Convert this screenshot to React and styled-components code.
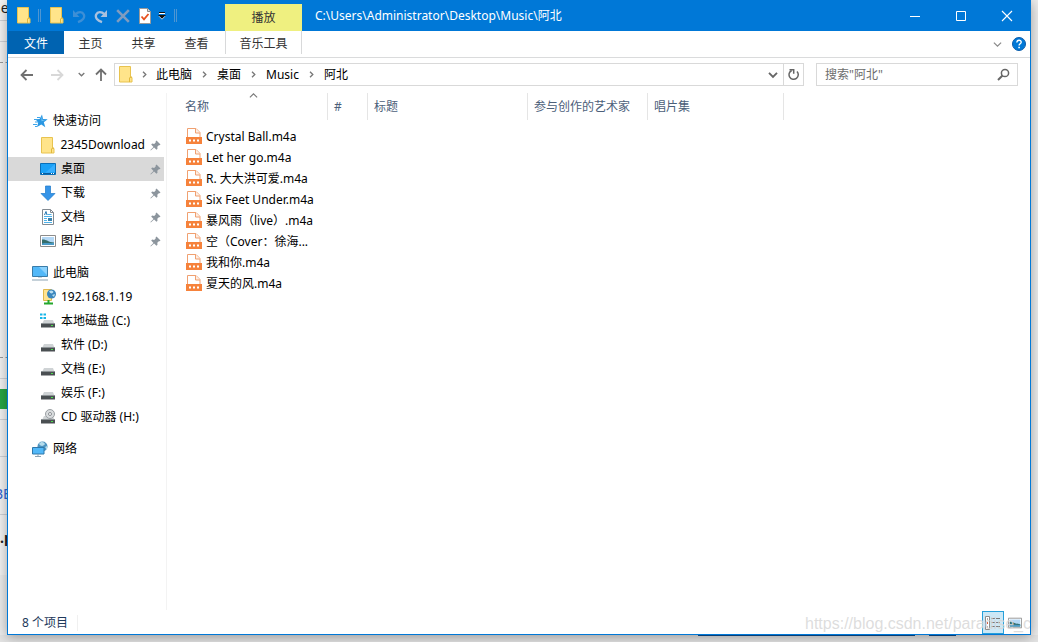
import React from "react";
import styled, { createGlobalStyle, css } from "styled-components";

const GlobalStyle = createGlobalStyle`
  * { box-sizing: border-box; }
  body { margin: 0; background: #ededed; }
  body, button, input {
    font-family: "Noto Sans", "Noto Sans CJK SC", sans-serif;
    font-size: 12px;
    line-height: 16px;
    color: #000;
  }
  button { margin: 0; padding: 0; border: 0; background: none; }
  svg { display: block; flex: none; }
`;

const Desktop = styled.div`
  position: relative;
  display: flex;
  min-height: 100vh;
  padding: 0 7px 7px;
  overflow: hidden;
`;

/* Page that shows behind the window */
const Backdrop = styled.div`
  position: absolute;
  inset: 0;
  display: flex;
  flex-direction: column;
  justify-content: space-between;
`;
const PageEdge = styled.div`
  width: 14px;
  overflow: hidden;
  background: #f4f4f4;
  font-size: 14px;
`;
const EdgeBlock = styled.div`
  height: ${(p) => p.$h}px;
  border-bottom: 1px ${(p) => (p.$dashed ? "dashed #999" : "solid #d0d3d8")};
  background: ${(p) => p.$bg || "transparent"};
  ${(p) => p.$plain && css`border-bottom: 0;`}
  color: ${(p) => p.$color || "#222"};
  font-weight: ${(p) => p.$weight || 400};
  padding-top: ${(p) => p.$top || 0}px;
  text-indent: ${(p) => p.$indent || 0}px;
  white-space: nowrap;
`;
const Taskbar = styled.div`
  display: flex;
  justify-content: flex-end;
  gap: 14px;
  height: 7px;
  padding-right: 82px;
  background: #e4e4e4;
`;
const TaskItem = styled.div`
  width: ${(p) => p.$w}px;
  height: 1px;
  background: #0b4f94;
`;

const Window = styled.main`
  position: relative;
  flex: 1;
  display: flex;
  flex-direction: column;
  background: #fff;
  border: 1px solid #0078d7;
  border-top: 0;
  box-shadow: 0 2px 12px rgba(0, 0, 0, 0.35);
`;

const TitleBar = styled.header`
  display: flex;
  height: 31px;
  background: #0078d7;
  color: #fff;
`;
const QuickAccess = styled.div`
  display: flex;
  align-items: center;
  width: 217px;
  padding-left: 8px;
`;
const QuickButton = styled.button`
  display: flex;
  align-items: center;
  justify-content: center;
  width: ${(p) => p.$w || 22}px;
  height: 31px;
`;
const Separator = styled.span`
  width: 3px;
  height: 13px;
  margin: 0 5px 0 6px;
  border: solid #4f96d2;
  border-width: 0 1px;
`;
const ContextTab = styled.div`
  display: flex;
  align-items: center;
  justify-content: center;
  width: 77px;
  margin-top: 4px;
  background: #eff080;
  color: #333;
`;
const Title = styled.h1`
  flex: 1;
  margin: 0;
  padding-left: 13px;
  font-size: 12px;
  font-weight: 400;
  line-height: 31px;
  white-space: nowrap;
`;
const CaptionButton = styled.button`
  display: flex;
  align-items: center;
  justify-content: center;
  width: 46px;
`;

const Ribbon = styled.div`
  display: flex;
  height: 27px;
  padding-bottom: 3px;
  border-bottom: 1px solid #dadbdc;
`;
const Tab = styled.button`
  width: 53px;
  height: 23px;
  padding-top: 2px;
  color: #333;
  ${(p) => p.$file && css`width: 56px; background: #0063b1; color: #fff;`}
  ${(p) => p.$context && css`
    width: 77px;
    margin-left: 2px;
    border: solid #d8d9da;
    border-width: 0 1px;
  `}
`;
const RibbonEnd = styled.div`
  display: flex;
  align-items: center;
  gap: 10px;
  margin-left: auto;
  padding: 3px 4px 0 0;
`;

const AddressRow = styled.div`
  display: flex;
  height: 35px;
  padding: 5px 12px 7px 11px;
`;
const History = styled.div`
  display: flex;
  align-items: center;
  gap: 6px;
  width: 95px;
`;
const HistoryButton = styled.button`
  display: flex;
  justify-content: center;
  width: ${(p) => p.$w}px;
`;
const AddressBox = styled.nav`
  flex: 1;
  display: flex;
  align-items: center;
  height: 23px;
  padding-left: 4px;
  border: 1px solid #d9d9d9;
`;
const Crumb = styled.a`
  color: #000;
  text-decoration: none;
`;
const CrumbArrow = styled.span`
  display: flex;
  justify-content: center;
  width: ${(p) => (p.$first ? 23 : 25)}px;
`;
const AddressButton = styled.button`
  display: flex;
  align-items: center;
  justify-content: center;
  width: 20px;
  height: 21px;
  ${(p) => p.$push && css`margin-left: auto;`}
  ${(p) => p.$line && css`border-left: 1px solid #d9d9d9;`}
`;
const SearchBox = styled.form`
  display: flex;
  align-items: center;
  width: 202px;
  height: 23px;
  margin-left: 12px;
  padding: 0 7px 0 8px;
  border: 1px solid #d9d9d9;
`;
const SearchInput = styled.input`
  flex: 1;
  min-width: 0;
  padding: 0;
  border: 0;
  outline: 0;
  background: none;
  &::placeholder { color: #6d6d6d; opacity: 1; }
`;

const Body = styled.div`
  flex: 1;
  display: flex;
`;
const Sidebar = styled.nav`
  width: 159px;
  padding: 16px 2px 0 0;
  border-right: 1px solid #f3f3f3;
`;
const Group = styled.ul`
  margin: 0 0 8px;
  padding: 0;
  list-style: none;
`;
const NavLink = styled.a`
  display: flex;
  align-items: center;
  gap: 5px;
  height: 24px;
  padding: 0 3px 0 ${(p) => (p.$root ? 24 : 32)}px;
  background: ${(p) => (p.$selected ? "#d9d9d9" : "transparent")};
  color: #000;
  text-decoration: none;
  white-space: nowrap;
`;
const NavLabel = styled.span`
  flex: 1;
`;

const Content = styled.section`
  flex: 1;
  overflow: hidden;
`;
const FileTable = styled.table`
  width: 617px;
  table-layout: fixed;
  border-collapse: collapse;
  text-align: left;
`;
const HeadCell = styled.th`
  width: ${(p) => p.$w}px;
  padding: 0 0 6px;
  font-weight: 400;
`;
const HeadLabel = styled.div`
  position: relative;
  height: 27px;
  padding-left: ${(p) => (p.$first ? 18 : 6)}px;
  border-right: 1px solid #e5e5e5;
  color: #4c607a;
  line-height: 27px;
`;
const SortMark = styled.span`
  position: absolute;
  top: -2px;
  left: 82px;
`;
const FileCell = styled.td`
  height: 21px;
  padding: 0 0 0 19px;
`;
const FileName = styled.span`
  display: flex;
  align-items: center;
  gap: 4px;
  white-space: nowrap;
`;

const StatusBar = styled.footer`
  display: flex;
  align-items: center;
  height: 24px;
  padding: 1px 4px 0 14px;
  color: #1e395b;
`;
const ItemCount = styled.span`
  padding-right: 9px;
  border-right: 1px solid #f0f0f0;
`;
const ViewButton = styled.button`
  display: flex;
  align-items: center;
  justify-content: center;
  width: 22px;
  height: 23px;
  ${(p) => p.$active && css`
    margin-left: auto;
    background: #cce8f6;
    border: 1px solid #26a0da;
  `}
`;
const Watermark = styled.span`
  position: absolute;
  right: 0;
  bottom: 0;
  width: 225px;
  overflow: hidden;
  font-family: "Liberation Sans", sans-serif;
  font-size: 16px;
  line-height: 20px;
  white-space: nowrap;
  color: rgba(215, 215, 215, 0.85);
  pointer-events: none;
`;

const Folder = () => (
  <svg width="14" height="17" viewBox="0 0 14 17">
    <path d="M.5.500h11v11h1.500v4.500H.5z" fill="#ffe48a" stroke="#e8c34f" />
    <path d="M10.500 16v-4l1-1h1.500" fill="none" stroke="#e0b83c" />
  </svg>
);
const Chevron = ({ dir = "down", w = 7, color = "#777", stroke = 1.500 }) => {
  const turn = { down: 0, right: -90, up: 180 }[dir];
  return (
    <svg width={w} height={w} viewBox="0 0 8 8">
      <path d="M.8 2.300 4 5.500l3.200-3.200" transform={`rotate(${turn} 4 4)`} fill="none" stroke={color} strokeWidth={stroke} />
    </svg>
  );
};
const Arrow = ({ turn = 0, color = "#707070" }) => (
  <svg width="14" height="14" viewBox="0 0 14 14">
    <g transform={`rotate(${turn} 7 7)`} fill="none" stroke={color} strokeWidth="1.800">
      <path d="M1.500 7H13M6.500 2l-5 5 5 5" />
    </g>
  </svg>
);
const Turn = ({ flip, color }) => (
  <svg width="14" height="16" viewBox="0 0 14 16">
    <g transform={flip ? "translate(14 0) scale(-1 1)" : undefined}>
      <path d="M8 14.200C3.500 12.500.8 9.800 2.200 6.500 3.600 3.500 7.500 3.300 10.500 6.300" fill="none" stroke={color} strokeWidth="2.300" />
      <path d="M13 2v7H6.500z" fill={color} />
    </g>
  </svg>
);
const Cross = ({ size, color, stroke }) => (
  <svg width={size} height={size} viewBox="0 0 12 12">
    <path d="m1 1 10 10M11 1 1 11" fill="none" stroke={color} strokeWidth={stroke} />
  </svg>
);
const CheckDoc = () => (
  <svg width="12" height="16" viewBox="0 0 12 16">
    <path d="M.5.500h8l3 3v12H.5z" fill="#fff" stroke="#9a9a9a" />
    <path d="M8.500.500v3h3" fill="#ddd" stroke="#8a8a8a" />
    <path d="m2.500 8.500 2.500 2.800L9.500 6" fill="none" stroke="#e8501e" strokeWidth="1.800" />
  </svg>
);
const MoreMark = () => (
  <svg width="8" height="8" viewBox="0 0 8 8">
    <path d="M1 .5h6" stroke="#111" />
    <path d="M1 1.500h6" stroke="#fff" />
    <path d="M0 3h8L4 7z" fill="#111" />
    <path d="M1 4.200 4 7.200l3-3" fill="none" stroke="#fff" strokeWidth=".7" />
  </svg>
);
const Minimize = () => (
  <svg width="10" height="10" viewBox="0 0 10 10"><path d="M0 5.500h10" stroke="#fff" /></svg>
);
const Maximize = () => (
  <svg width="10" height="10" viewBox="0 0 10 10"><path d="M.5.500h9v9h-9z" fill="none" stroke="#fff" /></svg>
);
const Help = () => (
  <svg width="14" height="14" viewBox="0 0 14 14">
    <circle cx="7" cy="7" r="6.500" fill="#0078d7" stroke="#0b5cab" />
    <path d="M4.800 5.500c0-3 4.600-2.800 4.400-.2C9.100 6.800 7.100 6.800 7.100 8.500" fill="none" stroke="#fff" strokeWidth="1.400" />
    <path d="M6.300 9.700h1.600v1.500H6.300z" fill="#fff" />
  </svg>
);
const Refresh = () => (
  <svg width="12" height="13" viewBox="0 0 12 13">
    <path d="M3.700 2.500A4.600 4.600 0 1 0 9 3.500" fill="none" stroke="#666" strokeWidth="1.500" />
    <path d="M1.500 1.700h4.200v4" fill="none" stroke="#666" strokeWidth="1.500" />
  </svg>
);
const Search = () => (
  <svg width="13" height="13" viewBox="0 0 13 13">
    <circle cx="8" cy="5" r="3.600" fill="none" stroke="#666" strokeWidth="1.500" />
    <path d="M5.500 7.500 1 12" stroke="#666" strokeWidth="2" />
  </svg>
);
const Pin = () => (
  <svg width="11" height="11" viewBox="0 0 11 11">
    <path d="m6.500.500 4 4-1 .8-.7-.1-1.500 1.600.2 2-1 1-2.400-2.400L.8 10.500l-.4-.4L3.500 7 1.200 4.600l1-1 2 .3L5.800 2.300l-.2-.9z" fill="#8c959d" />
  </svg>
);
const Icon = ({ children }) => (
  <svg width="16" height="16" viewBox="0 0 16 16">{children}</svg>
);
const Star = () => (
  <Icon>
    <path d="m10 1.500 1 4.500 4.700.2-3.900 3 1.500 5-4-2.800L5 14l1.200-4.600L3.500 6.300l4-.2z" fill="#2a97e2" />
    <path d="M5 4.500h3M2 6.500h3M3 9h3M1 11.500h4M3 13.500h2" stroke="#3ea5ea" />
    <path d="m9.500 3 1 4 3 .2-4 1z" fill="#73c5f7" />
  </Icon>
);
const DesktopIcon = () => (
  <Icon>
    <path d="M.5 2.500h15v11H.5z" fill="#1ba1f6" stroke="#0a6fb8" />
    <path d="M1 12h14v1H1z" fill="#0b5c9c" />
    <path d="M2 12.500h1M11 12.500h1M13 12.500h1" stroke="#fff" />
    <path d="M15 3v8L5 12z" fill="#36aeff" />
  </Icon>
);
const Download = () => (
  <Icon><path d="M5.500 1h5v7.500H15L8 15.500 1 8.500h4.500z" fill="#3594e8" stroke="#1d78c8" strokeWidth=".7" /></Icon>
);
const Document = () => (
  <Icon>
    <path d="M2.500.500h8l3 3v12h-11z" fill="#fff" stroke="#838b92" />
    <path d="M10.500.500v3h3" fill="none" stroke="#838b92" />
    <path d="M7.500 5.500h4M4 7.500h8M4 9.500h3M4 11.500h3M4 13.500h8" stroke="#4db2ea" />
    <path d="M4.500 6 6 2.500 7 6" fill="none" stroke="#2477b2" />
    <path d="M8 9h4v3H8z" fill="#3c83ad" />
  </Icon>
);
const Picture = ({ w = 16 }) => (
  <svg width={w} height={w} viewBox="0 0 16 16">
    <path d="M.5 2.500h15v11H.5z" fill="#fff" stroke="#8c8c8c" />
    <path d="M2 4h12v8H2z" fill="#b4d8f6" />
    <path d="M2 6.500c4-.5 6 2.500 12 3V12H2z" fill="#356e6c" />
    <path d="M2 10.500c5-1 8 0 12-.5v2H2z" fill="#4a9bc8" />
  </svg>
);
const Computer = () => (
  <Icon>
    <path d="M.5 1.500h15v10H.5z" fill="#52b8f8" stroke="#3a7ca8" />
    <path d="M15 2v8L7 2z" fill="#8bd2fd" />
    <path d="M6 12h4v1H6z" fill="#c9d6de" />
    <path d="M0 15h16" stroke="#8ba3b3" />
  </Icon>
);
const NetFolder = () => (
  <Icon>
    <path d="M3.500.500h8v11h-8z" fill="#ffe391" stroke="#e0b94d" />
    <circle cx="11.500" cy="5" r="4.500" fill="#3a86bd" />
    <path d="M9 2.500c2-2 4-1 4.500.5-1 2-3 2-4.500-.5M12 6l3-1-1 3z" fill="#b9dff2" />
    <path d="M8.500 11v3M4 14.500h9" stroke="#25a72c" strokeWidth="2" />
  </Icon>
);
const driveBody = (
  <>
    <path d="M4 7h9l1.500 4H2z" fill="#cfd3d5" />
    <path d="M1 10.500h14v4H1z" fill="#4a4f52" />
    <path d="M1 10.500h14" stroke="#8d9396" />
    <path d="M11 12.500h2" stroke="#4be04b" />
  </>
);
const Drive = () => <Icon>{driveBody}</Icon>;
const SystemDrive = () => (
  <Icon>
    {driveBody}
    <path d="M0 .5h2.500v2H0zM3.500.500H6v2H3.500zM0 4h2.500v2H0zM3.500 4H6v2H3.500z" fill="#16b5e8" />
  </Icon>
);
const DiscDrive = () => (
  <Icon>
    {driveBody}
    <circle cx="10" cy="5" r="4.500" fill="#d9dcde" stroke="#9a9fa3" />
    <circle cx="10" cy="5" r="1.500" fill="#fff" stroke="#8b8f93" />
  </Icon>
);
const Network = () => (
  <Icon>
    <circle cx="10.500" cy="5.500" r="5" fill="#4d93bf" />
    <path d="M7 3c2-3 5-2 6 0-1 2-4 3-6 0M13 6l2-1v4z" fill="#b5dcec" />
    <path d="M.5 6.500h11.500v6.500H.5z" fill="#52b8f8" stroke="#2f78ab" />
    <path d="M3 15.500h6M6 13v2" stroke="#8ba3b3" />
  </Icon>
);
const MediaFile = () => (
  <svg width="16" height="18" viewBox="0 0 16 18">
    <path d="M1.500 9.500V.500h8.500l4 4v5" fill="#fff" stroke="#f0a070" />
    <path d="M9.500.500v4.500H14" fill="#fdeee4" stroke="#f0a070" />
    <path d="M0 9h16v7H0z" fill="#f6823b" />
    <path d="M3 11.500h2v2H3zM7 11.500h2v2H7zM11 11.500h2v2h-2z" fill="#fff" />
  </svg>
);
const DetailsView = () => (
  <svg width="16" height="14" viewBox="0 0 16 14">
    <path d="M.5.500h4v13h-4z" fill="#fff" stroke="#8c8c8c" />
    <path d="M2 3h1M2 11h1" stroke="#b0a8a8" strokeWidth="2" />
    <path d="M2 7h1" stroke="#e05040" strokeWidth="2" />
    <path d="M6 2.500h4M11 2.500h4M6 6.500h4M11 6.500h4M6 10.500h4M11 10.500h4" stroke="#777" />
  </svg>
);

const groups = [
  [
    { label: "快速访问", icon: Star, root: true },
    { label: "2345Download", icon: Folder, pin: true },
    { label: "桌面", icon: DesktopIcon, pin: true, selected: true },
    { label: "下载", icon: Download, pin: true },
    { label: "文档", icon: Document, pin: true },
    { label: "图片", icon: Picture, pin: true },
  ],
  [
    { label: "此电脑", icon: Computer, root: true },
    { label: "192.168.1.19", icon: NetFolder },
    { label: "本地磁盘 (C:)", icon: SystemDrive },
    { label: "软件 (D:)", icon: Drive },
    { label: "文档 (E:)", icon: Drive },
    { label: "娱乐 (F:)", icon: Drive },
    { label: "CD 驱动器 (H:)", icon: DiscDrive },
  ],
  [{ label: "网络", icon: Network, root: true }],
];
const columns = [
  ["名称", 161],
  ["#", 40],
  ["标题", 160],
  ["参与创作的艺术家", 120],
  ["唱片集", 136],
];
const files = [
  "Crystal Ball.m4a",
  "Let her go.m4a",
  "R. 大大洪可爱.m4a",
  "Six Feet Under.m4a",
  "暴风雨（live）.m4a",
  "空（Cover：徐海...",
  "我和你.m4a",
  "夏天的风.m4a",
];
const crumbs = ["此电脑", "桌面", "Music", "阿北"];

const IconSlot = styled.span`
  display: flex;
  justify-content: center;
  width: 16px;
`;

export default function App() {
  return (
    <Desktop>
      <GlobalStyle />
      <Backdrop aria-hidden="true">
        <PageEdge>
          <EdgeBlock $h={21} $indent={-8}>ne</EdgeBlock>
          <EdgeBlock $h={21} />
          <EdgeBlock $h={21} $dashed />
          <EdgeBlock $h={295} $dashed />
          <EdgeBlock $h={21} />
          <EdgeBlock $h={10} $plain />
          <EdgeBlock $h={20} $plain $bg="#28a745" />
          <EdgeBlock $h={11} />
          <EdgeBlock $h={37} />
          <EdgeBlock $h={58} $top={29} $indent={-6} $color="#3367d6">BE</EdgeBlock>
          <EdgeBlock $h={60} $plain $top={15} $weight={700}>.p</EdgeBlock>
        </PageEdge>
        <Taskbar>
          <TaskItem $w={217} />
          <TaskItem $w={27} />
        </Taskbar>
      </Backdrop>

      <Window>
        <TitleBar>
          <QuickAccess>
            <QuickButton $w={16} aria-label="窗口菜单"><Folder /></QuickButton>
            <Separator />
            <QuickButton aria-label="新建文件夹"><Folder /></QuickButton>
            <QuickButton aria-label="撤消"><Turn flip color="#3d8fd6" /></QuickButton>
            <QuickButton aria-label="恢复"><Turn color="#a9c1de" /></QuickButton>
            <QuickButton aria-label="删除"><Cross size={14} color="#7f9cc0" stroke={2.2} /></QuickButton>
            <QuickButton aria-label="属性"><CheckDoc /></QuickButton>
            <QuickButton $w={12} aria-label="自定义快速访问工具栏"><MoreMark /></QuickButton>
            <Separator />
          </QuickAccess>
          <ContextTab>播放</ContextTab>
          <Title>C:\Users\Administrator\Desktop\Music\阿北</Title>
          <CaptionButton aria-label="最小化"><Minimize /></CaptionButton>
          <CaptionButton aria-label="最大化"><Maximize /></CaptionButton>
          <CaptionButton aria-label="关闭"><Cross size={12} color="#fff" stroke={1.1} /></CaptionButton>
        </TitleBar>

        <Ribbon>
          <Tab $file>文件</Tab>
          <Tab>主页</Tab>
          <Tab>共享</Tab>
          <Tab>查看</Tab>
          <Tab $context>音乐工具</Tab>
          <RibbonEnd>
            <button aria-label="展开功能区"><Chevron w={9} color="#8a8a8a" stroke={1.1} /></button>
            <button aria-label="帮助"><Help /></button>
          </RibbonEnd>
        </Ribbon>

        <AddressRow>
          <History>
            <HistoryButton $w={16} aria-label="后退"><Arrow /></HistoryButton>
            <HistoryButton $w={32} aria-label="前进"><Arrow turn={180} color="#d8d8d8" /></HistoryButton>
            <HistoryButton $w={4} aria-label="最近浏览的位置"><Chevron w={7} /></HistoryButton>
            <HistoryButton $w={24} aria-label="上移"><Arrow turn={90} /></HistoryButton>
          </History>
          <AddressBox aria-label="地址">
            <Folder />
            {crumbs.map((name, i) => (
              <React.Fragment key={name}>
                <CrumbArrow $first={i === 0}><Chevron dir="right" /></CrumbArrow>
                <Crumb href="#">{name}</Crumb>
              </React.Fragment>
            ))}
            <AddressButton $push aria-label="以前的位置"><Chevron w={10} color="#666" /></AddressButton>
            <AddressButton $line aria-label="刷新"><Refresh /></AddressButton>
          </AddressBox>
          <SearchBox role="search">
            <SearchInput aria-label="搜索" placeholder={'搜索"阿北"'} />
            <button type="button" aria-label="开始搜索"><Search /></button>
          </SearchBox>
        </AddressRow>

        <Body>
          <Sidebar aria-label="导航窗格">
            {groups.map((items) => (
              <Group key={items[0].label}>
                {items.map(({ label, icon: Glyph, root, pin, selected }) => (
                  <li key={label}>
                    <NavLink href="#" $root={root} $selected={selected}>
                      <IconSlot><Glyph /></IconSlot>
                      <NavLabel>{label}</NavLabel>
                      {pin && <Pin />}
                    </NavLink>
                  </li>
                ))}
              </Group>
            ))}
          </Sidebar>
          <Content>
            <FileTable>
              <thead>
                <tr>
                  {columns.map(([name, w], i) => (
                    <HeadCell key={name} $w={w} scope="col">
                      <HeadLabel $first={i === 0}>
                        {name}
                        {i === 0 && <SortMark><Chevron dir="up" w={9} stroke={1} /></SortMark>}
                      </HeadLabel>
                    </HeadCell>
                  ))}
                </tr>
              </thead>
              <tbody>
                {files.map((name) => (
                  <tr key={name}>
                    <FileCell colSpan={5}>
                      <FileName><MediaFile />{name}</FileName>
                    </FileCell>
                  </tr>
                ))}
              </tbody>
            </FileTable>
          </Content>
        </Body>

        <StatusBar>
          <ItemCount>8 个项目</ItemCount>
          <ViewButton $active aria-label="详细信息"><DetailsView /></ViewButton>
          <ViewButton aria-label="大缩略图"><Picture w={14} /></ViewButton>
        </StatusBar>
        <Watermark>https://blog.csdn.net/paradise_c</Watermark>
      </Window>
    </Desktop>
  );
}
